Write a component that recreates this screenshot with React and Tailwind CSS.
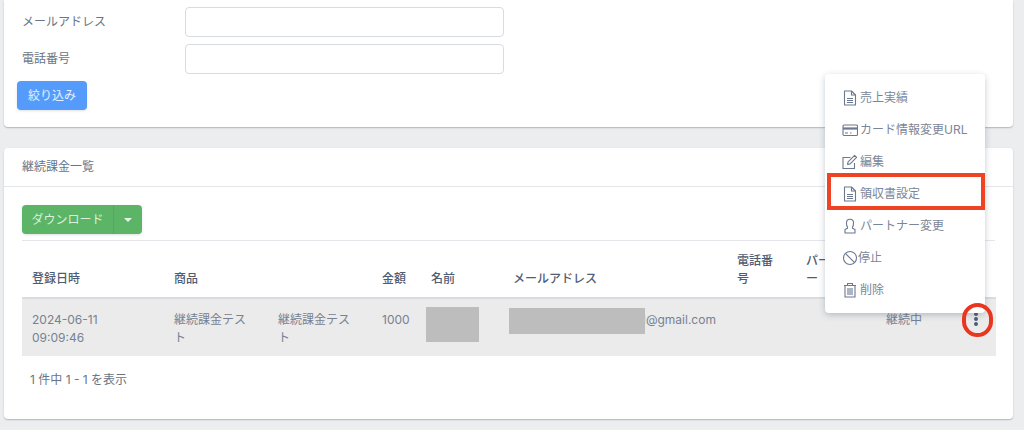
const Doc = () => (
  <svg viewBox="0 0 16 16" className="h-4 w-4 shrink-0" fill="none" stroke="#6b7890" strokeWidth="1.1">
    <path d="M2.5 1h7L13.5 5v10h-11z" strokeLinejoin="round" />
    <path d="M9.5 1v4h4M5 8.5h6M5 10.5h6M5 12.5h6" />
  </svg>
);
const Card = () => (
  <svg viewBox="0 0 16 16" className="h-4 w-4 shrink-0" fill="none" stroke="#6b7890" strokeWidth="1.1">
    <rect x="1" y="3" width="14.5" height="10.5" rx="1" />
    <path d="M1 6.5h14.5" strokeWidth="2.2" />
    <path d="M3 11h3M8 11h1.5" />
  </svg>
);
const Pencil = () => (
  <svg viewBox="0 0 16 16" className="h-4 w-4 shrink-0" fill="none" stroke="#6b7890" strokeWidth="1.1">
    <path d="M12.5 9v5.5H1V3.5h7.5" />
    <path d="M5.5 10.5l.6-2.6L12.6 1.4l2 2-6.5 6.5z" strokeLinejoin="round" />
  </svg>
);
const User = () => (
  <svg viewBox="0 0 16 16" className="h-4 w-4 shrink-0" fill="none" stroke="#6b7890" strokeWidth="1.1">
    <path d="M5.5 10.2V9C4.4 8 4.5 6.5 4.5 4.8a3.5 3.5 0 0 1 7 0c0 1.7.1 3.2-1 4.2v1.2l2.5 1.3v3.5H3v-3.5z" strokeLinejoin="round" />
  </svg>
);
const Ban = () => (
  <svg viewBox="0 0 16 16" className="h-4 w-4 shrink-0" fill="none" stroke="#6b7890" strokeWidth="1.1">
    <circle cx="8" cy="8" r="6.5" />
    <path d="M3.4 3.4l9.2 9.2" />
  </svg>
);
const Trash = () => (
  <svg viewBox="0 0 16 16" className="h-4 w-4 shrink-0" fill="none" stroke="#6b7890" strokeWidth="1.1">
    <path d="M2 3.5h12M5.5 3.5V1.5h5v2M3 3.5v11.5h10V3.5M6 6v7M8 6v7M10 6v7" />
  </svg>
);

const menuItems = [
  { label: '売上実績', icon: Doc },
  { label: 'カード情報変更URL', icon: Card },
  { label: '編集', icon: Pencil },
  { label: '領収書設定', icon: Doc },
  { label: 'パートナー変更', icon: User },
  { label: '停止', icon: Ban, tight: true },
  { label: '削除', icon: Trash },
];

export default function App() {
  return (
    <div className="relative h-[430px] w-[1024px] overflow-hidden bg-[#ebedef] text-[12px] text-[#768192] [font-family:Inter,'Noto_Sans_CJK_JP',sans-serif]">
      <div className="ml-1 mr-[11px] h-[127px] rounded-b bg-white pt-[7px] shadow-[0_1px_1px_rgba(60,75,100,0.2),0_1px_2px_rgba(60,75,100,0.15)]">
        <div className="flex h-[30px] items-center pl-[18px]">
          <span className="w-[163px] text-[#6a7483]">メールアドレス</span>
          <div className="h-[30px] w-[319px] rounded border border-[#d8dbe0] bg-white" />
        </div>
        <div className="mt-[7px] flex h-[30px] items-center pl-[18px]">
          <span className="w-[163px] text-[#6a7483]">電話番号</span>
          <div className="h-[30px] w-[319px] rounded border border-[#d8dbe0] bg-white" />
        </div>
        <button type="button" className="ml-[13px] mt-[7px] flex h-[29px] w-[70px] items-center justify-center rounded bg-[#559bfb] text-[#e6f0ff] shadow-sm">
          絞り込み
        </button>
      </div>

      <div className="ml-1 mr-[11px] mt-[21px] h-[271px] rounded bg-white shadow-[0_1px_1px_rgba(60,75,100,0.2),0_1px_2px_rgba(60,75,100,0.15)]">
        <div className="flex h-[39px] items-center border-b border-[#e4e6e9] pl-[18px] text-[#6a7483]">継続課金一覧</div>
        <div className="px-[18px] pt-[18px]">
          <div className="flex h-[29px] w-[120px] rounded bg-[#5cb567] text-[#d9f0dc] shadow-sm">
            <span className="flex w-[92px] items-center justify-center border-r border-[#53a85e]">ダウンロード</span>
            <span className="flex flex-1 items-center justify-center">
              <span className="h-0 w-0 border-x-[4px] border-t-[4px] border-x-transparent border-t-[#e8f6ea]" />
            </span>
          </div>
          <div className="mt-[6px] border-t border-[#e4e6e9]">
            <div className="grid h-[58px] w-[974px] grid-cols-[142px_104px_104px_49px_82px_224px_69px_80px_84px_36px] items-end border-b-2 border-[#d8dbe0] pb-[9px] font-medium leading-[18px] text-[#4f5d73]">
              <span className="pl-[10px]">登録日時</span>
              <span className="pl-[10px]">商品</span>
              <span />
              <span className="pl-[10px]">金額</span>
              <span className="pl-[10px]">名前</span>
              <span className="pl-[10px]">メールアドレス</span>
              <span className="pl-[10px]">電話番<br />号</span>
              <span className="pl-[10px]">パー<br />ー</span>
              <span />
              <span />
            </div>
            <div className="grid h-[57px] w-[974px] grid-cols-[142px_104px_104px_49px_82px_224px_69px_80px_84px_36px] items-start bg-[#ebebeb] pt-[12px] leading-[18px]">
              <span className="pl-[10px]">2024-06-11<br />09:09:46</span>
              <span className="pl-[10px]">継続課金テス<br />ト</span>
              <span className="pl-[10px]">継続課金テス<br />ト</span>
              <span className="pl-[10px]">1000</span>
              <span className="relative pl-[10px]">
                <span className="absolute left-[5px] top-[-4px] h-[35px] w-[53px] bg-[#bdbdbd]" />
              </span>
              <span className="relative whitespace-nowrap pl-[10px]">
                <span className="invisible">xxxxxxxxxxxxxxxxx</span>
                <span className="absolute left-[138px] top-0">1@gmail.com</span>
                <span className="absolute left-[6px] top-[-3px] h-[26px] w-[136px] bg-[#bdbdbd]" />
              </span>
              <span />
              <span />
              <span className="pl-[10px]">継続中</span>
              <span className="flex flex-col items-center gap-[1.5px] pr-[4px] pt-[1px]">
                <span className="h-[3.5px] w-[3.5px] rounded-full bg-[#4f5d73]" />
                <span className="h-[3.5px] w-[3.5px] rounded-full bg-[#4f5d73]" />
                <span className="h-[3.5px] w-[3.5px] rounded-full bg-[#4f5d73]" />
              </span>
            </div>
            <div className="mt-[15px] pl-[8px] leading-[18px] text-[#6a7483]">1 件中 1 - 1 を表示</div>
          </div>
        </div>
      </div>

      <div className="absolute left-[825px] top-[74px] h-[239px] w-[160px] rounded bg-white pt-[8px] shadow-[0_2px_6px_rgba(60,75,100,0.3)]">
        {menuItems.map((item) => (
          <div key={item.label} className={`flex h-[32px] items-center whitespace-nowrap pl-[17px] text-[#7b8698] ${item.tight ? 'gap-0' : 'gap-[2px]'}`}>
            <item.icon />
            <span>{item.label}</span>
          </div>
        ))}
      </div>

      <div className="absolute left-[827px] top-[173px] h-[37px] w-[158px] border-4 border-[#ee4423]" />
      <div className="absolute left-[962px] top-[303px] h-[34px] w-[31px] rounded-full border-4 border-[#e9361f]" />
    </div>
  );
}
